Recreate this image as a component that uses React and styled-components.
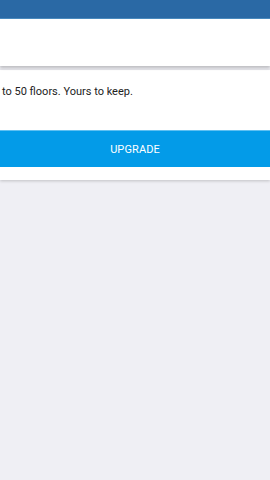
import React from "react";
import styled, { createGlobalStyle } from "styled-components";

const Global = createGlobalStyle`
  html, body { margin: 0; padding: 0; }
  body {
    background: #efeff4;
    font-family: Roboto, "Liberation Sans", sans-serif;
    width: 270px;
    height: 480px;
    overflow: hidden;
  }
`;

const Page = styled.div`
  display: flex;
  flex-direction: column;
  width: 270px;
  min-height: 480px;
  background: #efeff4;
`;

const TopBar = styled.div`
  height: 18px;
  background: #2a69a5;
  border-bottom: 1px solid #4a8bc0;
`;

const HeaderCard = styled.div`
  height: 47px;
  background: #ffffff;
  box-shadow: 0 2px 3px rgba(0, 0, 0, 0.22);
  position: relative;
  z-index: 1;
`;

const Panel = styled.div`
  display: flex;
  flex-direction: column;
  background: #ffffff;
  margin-top: 4px;
  padding-top: 15px;
  padding-bottom: 13px;
  box-shadow: 0 1px 3px rgba(0, 0, 0, 0.2);
`;

const Message = styled.p`
  margin: 0;
  padding: 0 0 0 2px;
  font-size: 11px;
  line-height: 14px;
  color: #222222;
  height: 45px;
`;

const UpgradeButton = styled.button`
  display: flex;
  align-items: center;
  justify-content: center;
  height: 37px;
  border: none;
  border-top: 1px solid #5fc0f2;
  background: #039be8;
  color: #ffffff;
  font-family: Roboto, "Liberation Sans", sans-serif;
  font-size: 11px;
  letter-spacing: 0.1px;
  text-transform: uppercase;
  padding: 0;
  width: 100%;
`;

export default function App() {
  return (
    <>
      <Global />
      <Page>
        <TopBar />
        <HeaderCard />
        <Panel>
          <Message>to 50 floors. Yours to keep.</Message>
          <UpgradeButton>Upgrade</UpgradeButton>
        </Panel>
      </Page>
    </>
  );
}
